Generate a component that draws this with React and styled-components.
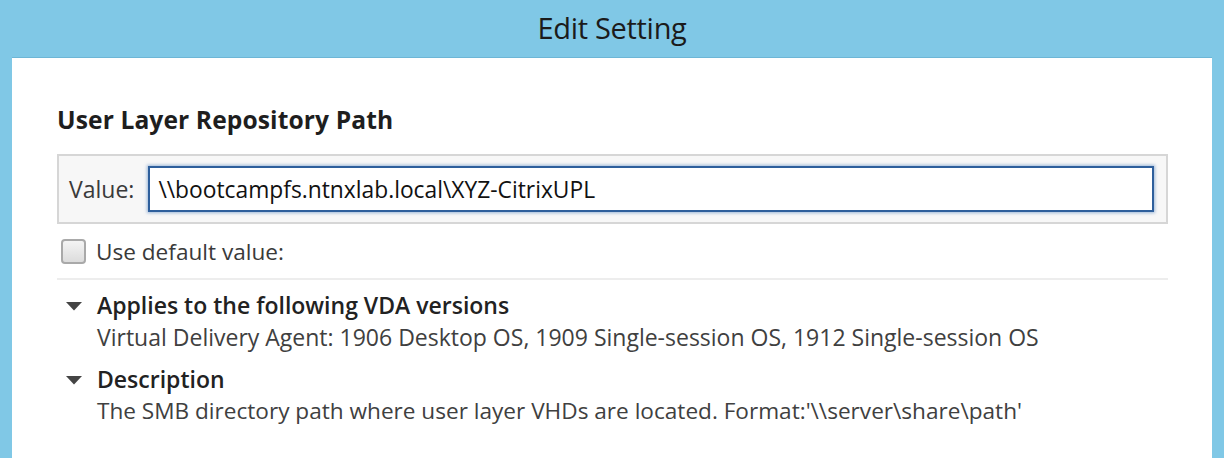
import React, { useState } from "react";
import styled, { createGlobalStyle } from "styled-components";

const GlobalStyle = createGlobalStyle`
  html, body {
    margin: 0;
    padding: 0;
    background: #80c8e6;
    font-family: "Open Sans", "Noto Sans", "Liberation Sans", sans-serif;
  }
`;

const Window = styled.div`
  width: 1224px;
  height: 458px;
  display: flex;
  flex-direction: column;
  background: #80c8e6;
  overflow: hidden;
  box-sizing: border-box;
`;

const TitleBar = styled.div`
  height: 57px;
  display: flex;
  align-items: center;
  justify-content: center;
  color: #1b1b1b;
  font-size: 29px;
  letter-spacing: -0.3px;
  padding-bottom: 2px;
  box-sizing: border-box;
`;

const Panel = styled.div`
  flex: 1;
  margin: 0 12px;
  background: #ffffff;
  border-top: 1px solid #6db6d6;
  padding: 47px 44px 0 45px;
  display: flex;
  flex-direction: column;
  box-sizing: border-box;
`;

const Heading = styled.div`
  font-size: 24.6px;
  font-weight: 700;
  color: #1e1e1e;
  line-height: 30px;
  letter-spacing: 0.1px;
`;

const ValueBox = styled.div`
  margin-top: 19px;
  height: 70px;
  display: flex;
  align-items: center;
  gap: 14px;
  padding: 0 12px 0 10px;
  border: 2px solid #d6d6d6;
  background: #f7f7f7;
  box-sizing: border-box;
`;

const Label = styled.label`
  font-size: 23px;
  color: #3a3a3a;
`;

const TextInput = styled.input`
  flex: 1;
  height: 46px;
  border: 2px solid #2e5f9c;
  box-shadow: 0 0 3px 1px rgba(80, 130, 190, 0.55);
  padding: 0 8px;
  font-family: inherit;
  font-size: 22.8px;
  color: #111;
  background: #fff;
  outline: none;
  box-sizing: border-box;
`;

const CheckRow = styled.label`
  margin-top: 12px;
  display: flex;
  align-items: center;
  gap: 10px;
  font-size: 22.6px;
  color: #3a3a3a;
  cursor: pointer;
`;

const CheckBox = styled.span`
  width: 25px;
  height: 25px;
  margin-left: 4px;
  border: 2px solid #a9a9a9;
  border-radius: 4px;
  background: linear-gradient(#f4f4f4, #dcdcdc);
  box-sizing: border-box;
`;

const Separator = styled.div`
  margin-top: 11px;
  height: 2px;
  background: #ededed;
`;

const Section = styled.div`
  margin-top: ${(p) => p.$top}px;
  display: flex;
  gap: 14px;
`;

const Toggle = styled.div`
  width: 18px;
  padding-top: 13px;
  padding-left: 8px;
  display: flex;
  justify-content: center;
`;

const SectionBody = styled.div`
  display: flex;
  flex-direction: column;
`;

const SectionTitle = styled.div`
  font-size: 23px;
  font-weight: 600;
  color: #222;
  line-height: 32px;
`;

const SectionText = styled.div`
  font-size: ${(p) => p.$size || 23}px;
  color: #404040;
  line-height: 32px;
`;

const Arrow = () => (
  <svg width="16" height="9" viewBox="0 0 16 9">
    <path d="M0 0 H16 L8 8.5 Z" fill="#444" />
  </svg>
);

export default function App() {
  const [value, setValue] = useState("\\\\bootcampfs.ntnxlab.local\\XYZ-CitrixUPL");
  return (
    <Window>
      <GlobalStyle />
      <TitleBar>Edit Setting</TitleBar>
      <Panel>
        <Heading>User Layer Repository Path</Heading>
        <ValueBox>
          <Label>Value:</Label>
          <TextInput value={value} onChange={(e) => setValue(e.target.value)} />
        </ValueBox>
        <CheckRow>
          <CheckBox />
          Use default value:
        </CheckRow>
        <Separator />
        <Section $top={9}>
          <Toggle>
            <Arrow />
          </Toggle>
          <SectionBody>
            <SectionTitle>Applies to the following VDA versions</SectionTitle>
            <SectionText>
              Virtual Delivery Agent: 1906 Desktop OS, 1909 Single-session OS, 1912 Single-session OS
            </SectionText>
          </SectionBody>
        </Section>
        <Section $top={10}>
          <Toggle>
            <Arrow />
          </Toggle>
          <SectionBody>
            <SectionTitle>Description</SectionTitle>
            <SectionText $size={22.6}>
              The SMB directory path where user layer VHDs are located. Format:'\\server\share\path'
            </SectionText>
          </SectionBody>
        </Section>
      </Panel>
    </Window>
  );
}
